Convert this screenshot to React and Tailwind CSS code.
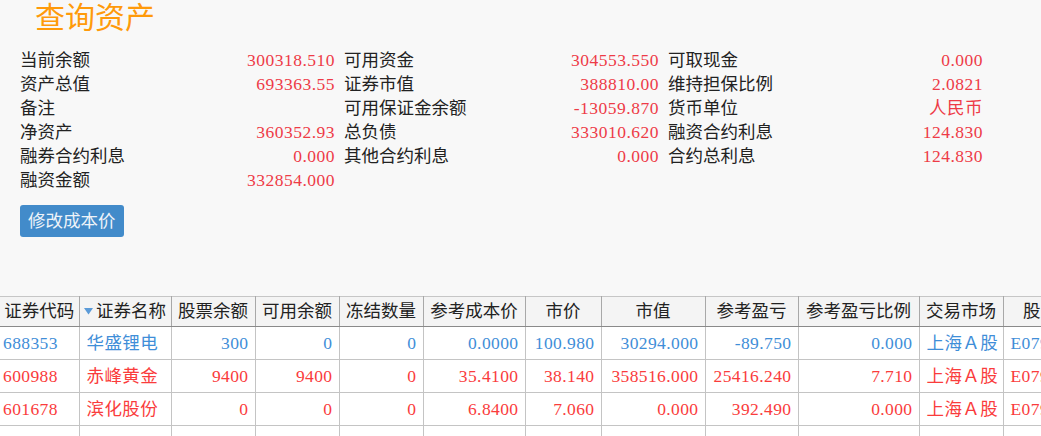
import React from "react";

const info = [
  [["当前余额", "300318.510"], ["可用资金", "304553.550"], ["可取现金", "0.000"]],
  [["资产总值", "693363.55"], ["证券市值", "388810.00"], ["维持担保比例", "2.0821"]],
  [["备注", ""], ["可用保证金余额", "-13059.870"], ["货币单位", "人民币"]],
  [["净资产", "360352.93"], ["总负债", "333010.620"], ["融资合约利息", "124.830"]],
  [["融券合约利息", "0.000"], ["其他合约利息", "0.000"], ["合约总利息", "124.830"]],
  [["融资金额", "332854.000"]],
];

const cols = [
  { title: "证券代码", w: 79, align: "text-left pl-[3px]" },
  { title: "证券名称", w: 92, align: "text-left pl-[7px]", sort: true },
  { title: "股票余额", w: 84, align: "text-right pr-[6px]" },
  { title: "可用余额", w: 84, align: "text-right pr-[6px]" },
  { title: "冻结数量", w: 84, align: "text-right pr-[6px]" },
  { title: "参考成本价", w: 102, align: "text-right pr-[6px]" },
  { title: "市价", w: 76, align: "text-right pr-[6px]" },
  { title: "市值", w: 104, align: "text-right pr-[6px]" },
  { title: "参考盈亏", w: 93, align: "text-right pr-[6px]" },
  { title: "参考盈亏比例", w: 121, align: "text-right pr-[6px]" },
  { title: "交易市场", w: 84, align: "text-left pl-[7px]" },
  { title: "股东代码", w: 110, align: "text-left pl-[7px]" },
];

const rows = [
  { color: "text-[#3f8ed8]", cells: ["688353", "华盛锂电", "300", "0", "0", "0.0000", "100.980", "30294.000", "-89.750", "0.000", "上海Ａ股", "E079163522"] },
  { color: "text-[#fa3c3c]", cells: ["600988", "赤峰黄金", "9400", "9400", "0", "35.4100", "38.140", "358516.000", "25416.240", "7.710", "上海Ａ股", "E079163522"] },
  { color: "text-[#fa3c3c]", cells: ["601678", "滨化股份", "0", "0", "0", "6.8400", "7.060", "0.000", "392.490", "0.000", "上海Ａ股", "E079163522"] },
];

function SortMark() {
  return (
    <svg width="9" height="7" viewBox="0 0 9 7" className="inline-block mr-[3px] mb-[3px]">
      <path d="M0 0 L9 0 L4.5 6.5 Z" fill="#5b9bd8" />
    </svg>
  );
}

export default function App() {
  return (
    <div
      className="w-[1041px] h-[436px] overflow-hidden bg-[#f8f8f8] text-[17.5px] text-[#222]"
      style={{ fontFamily: "'Liberation Serif', 'Noto Sans CJK SC', serif" }}
    >
      <div className="pl-[20px]">
        <h1 className="pl-[15px] text-[30px] leading-[36px] text-[#ff9a0a]">查询资产</h1>

        <div className="mt-[12px] grid grid-cols-[324px_324px_324px]">
          {info.map((row, ri) =>
            [0, 1, 2].map((ci) => {
              const item = row[ci];
              if (!item) return <div key={ri + "-" + ci} className="h-[24px]" />;
              return (
                <div key={ri + "-" + ci} className="h-[24px] flex items-center justify-between pr-[9px] leading-[24px]">
                  <span>{item[0]}</span>
                  <span className="text-[#ee3b47] tracking-[0.5px]">{item[1]}</span>
                </div>
              );
            })
          )}
        </div>

        <button className="mt-[13px] h-[32px] px-[8px] rounded-[3px] bg-[#428bca] text-[#eef3f9] leading-[32px]">
          修改成本价
        </button>
      </div>

      <div className="mt-[59px] w-full overflow-hidden">
        <table className="border-collapse table-fixed" style={{ width: 1113 }}>
          <colgroup>
            {cols.map((c, i) => (
              <col key={i} style={{ width: c.w }} />
            ))}
          </colgroup>
          <thead>
            <tr className="h-[30px] bg-[#f4f4f4]">
              {cols.map((c, i) => (
                <th
                  key={i}
                  className="font-normal text-center whitespace-nowrap overflow-hidden border-t border-t-[#c6c6c6] border-b border-b-[#8a8a8a] border-x border-x-[#a8a8a8] first:border-l-0 p-0"
                >
                  {c.sort && <SortMark />}
                  {c.title}
                </th>
              ))}
            </tr>
          </thead>
          <tbody className="bg-white">
            {rows.map((r, ri) => (
              <tr key={ri} className="h-[33px]">
                {r.cells.map((v, ci) => (
                  <td
                    key={ci}
                    className={`${cols[ci].align} ${r.color} tracking-[0.4px] whitespace-nowrap overflow-hidden border border-[#c4c4c4] first:border-l-0 py-0`}
                  >
                    {v}
                  </td>
                ))}
              </tr>
            ))}
            <tr className="h-[33px]">
              {cols.map((c, ci) => (
                <td key={ci} className="border border-[#c4c4c4] first:border-l-0" />
              ))}
            </tr>
          </tbody>
        </table>
      </div>
    </div>
  );
}
